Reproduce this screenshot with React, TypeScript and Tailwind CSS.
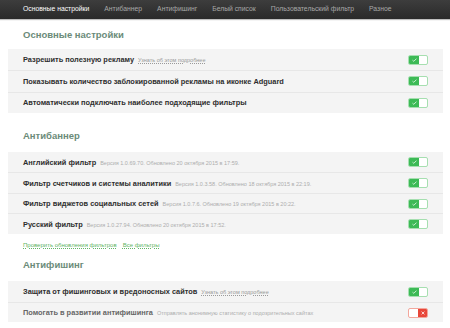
import React from 'react';

const tabs = [
  'Основные настройки',
  'Антибаннер',
  'Антифишинг',
  'Белый список',
  'Пользовательский фильтр',
  'Разное',
];

type Row = {
  title: string;
  note?: string;
  link?: string;
  on: boolean;
  light?: boolean;
};

const general: Row[] = [
  { title: 'Разрешить полезную рекламу', link: 'Узнать об этом подробнее', on: true },
  { title: 'Показывать количество заблокированной рекламы на иконке Adguard', on: true },
  { title: 'Автоматически подключать наиболее подходящие фильтры', on: true },
];

const filters: Row[] = [
  { title: 'Английский фильтр', note: 'Версия 1.0.69.70. Обновлено 20 октября 2015 в 17:59.', on: true },
  { title: 'Фильтр счетчиков и системы аналитики', note: 'Версия 1.0.3.58. Обновлено 18 октября 2015 в 22:19.', on: true },
  { title: 'Фильтр виджетов социальных сетей', note: 'Версия 1.0.7.6. Обновлено 19 октября 2015 в 20:22.', on: true },
  { title: 'Русский фильтр', note: 'Версия 1.0.27.94. Обновлено 20 октября 2015 в 17:52.', on: true },
];

const phishing: Row[] = [
  { title: 'Защита от фишинговых и вредоносных сайтов', link: 'Узнать об этом подробнее', on: true },
  {
    title: 'Помогать в развитии антифишинга',
    note: 'Отправлять анонимную статистику о подозрительных сайтах',
    on: false,
    light: true,
  },
];

function Toggle({ on }: { on: boolean }) {
  if (on) {
    return (
      <div className="flex h-[10px] w-[20px] overflow-hidden rounded-[2px] border border-[#a6dfb0] bg-white">
        <div className="flex w-[10px] items-center justify-center bg-[#3dba56]">
          <svg width="5" height="4" viewBox="0 0 5 4">
            <path d="M0.5 2.2 L1.8 3.3 L4.5 0.6" stroke="#d8f5de" strokeWidth="0.9" fill="none" />
          </svg>
        </div>
      </div>
    );
  }
  return (
    <div className="flex h-[10px] w-[20px] overflow-hidden rounded-[2px] border border-[#f3a79c] bg-white">
      <div className="w-[9px]" />
      <div className="flex flex-1 items-center justify-center bg-[#e8473a]">
        <svg width="4" height="4" viewBox="0 0 4 4">
          <path d="M0.6 0.6 L3.4 3.4 M3.4 0.6 L0.6 3.4" stroke="#fbe2df" strokeWidth="0.9" />
        </svg>
      </div>
    </div>
  );
}

function Panel({ rows, tall }: { rows: Row[]; tall?: boolean }) {
  return (
    <div className="ml-[8px] mr-[7px] bg-[#f4f4f4]">
      {rows.map((r, i) => (
        <div
          key={r.title}
          className={`flex items-center justify-between pl-[15px] pr-[15px] ${
            tall ? 'h-[21.3px]' : 'h-[20.5px]'
          } ${i > 0 ? 'border-t border-[#e7e7e7]' : ''}`}
        >
          <div className="flex items-baseline gap-[4px] whitespace-nowrap">
            <span
              className={`text-[7.4px] font-semibold ${r.light ? 'text-[#666]' : 'text-[#2e2e2e]'}`}
            >
              {r.title}
            </span>
            {r.note && <span className="text-[5.5px] text-[#adadad]">{r.note}</span>}
            {r.link && (
              <span className="text-[5.5px] text-[#9a9a9a] underline decoration-dotted">{r.link}</span>
            )}
          </div>
          <Toggle on={r.on} />
        </div>
      ))}
    </div>
  );
}

function Heading({ children }: { children: React.ReactNode }) {
  return (
    <h2 className="px-[23px] text-[9.5px] leading-[14px] font-bold text-[#6b8b79]">{children}</h2>
  );
}

export default function App() {
  return (
    <div
      className="h-[328px] w-[450px] overflow-hidden bg-white"
      style={{ fontFamily: '"Liberation Sans", Arial, sans-serif' }}
    >
      <nav className="flex h-[19px] items-center gap-[15px] bg-gradient-to-b from-[#3d3d3d] to-[#2a2a2a] pl-[23px] text-[6.8px] shadow-[0_1px_1px_rgba(0,0,0,0.25)]">
        {tabs.map((t, i) => (
          <span key={t} className={i === 0 ? 'text-white' : 'text-[#a8a8a8]'}>
            {t}
          </span>
        ))}
      </nav>

      <div className="pt-[9px]">
        <Heading>Основные настройки</Heading>
        <div className="mt-[7px]">
          <Panel rows={general} tall />
        </div>

        <div className="mt-[16px]">
          <Heading>Антибаннер</Heading>
        </div>
        <div className="mt-[9px]">
          <Panel rows={filters} />
        </div>

        <div className="mt-[7px] flex gap-[6px] px-[23px] text-[6px] leading-[9px] text-[#63b566]">
          <span className="underline decoration-dotted">Проверить обновления фильтров</span>
          <span className="underline decoration-dotted">Все фильтры</span>
        </div>

        <div className="mt-[8px]">
          <Heading>Антифишинг</Heading>
        </div>
        <div className="mt-[9.5px]">
          <Panel rows={phishing} />
        </div>
      </div>
    </div>
  );
}
